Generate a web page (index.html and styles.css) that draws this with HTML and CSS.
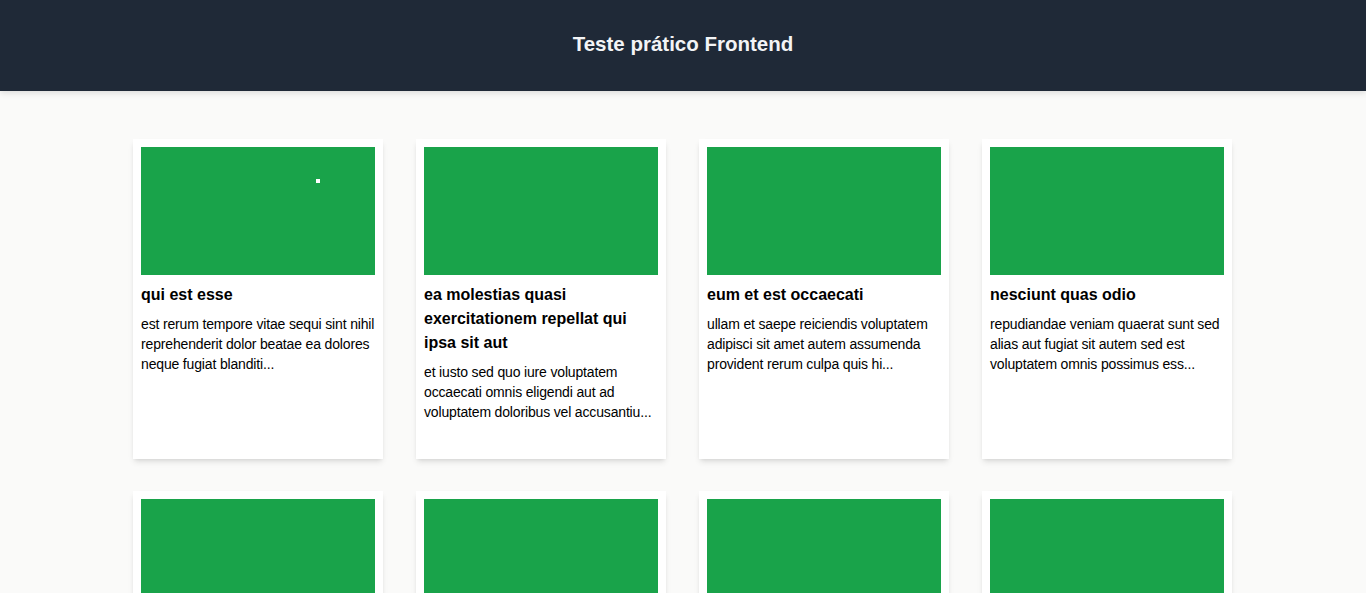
FILE: index.html
```html
<!DOCTYPE html>
<html lang="pt">
<head>
<meta charset="utf-8">
<title>Teste prático Frontend</title>
<link rel="stylesheet" href="styles.css">
</head>
<body>
<header class="header">
  <h1 class="header-title">Teste prático Frontend</h1>
</header>
<main class="main">
  <div class="grid">
    <article class="card">
      <div class="card-image"><span class="card-dot"></span></div>
      <h2 class="card-title">qui est esse</h2>
      <p class="card-text">est rerum tempore vitae sequi sint nihil reprehenderit dolor beatae ea dolores neque fugiat blanditi...</p>
    </article>
    <article class="card">
      <div class="card-image"></div>
      <h2 class="card-title">ea molestias quasi exercitationem repellat qui ipsa sit aut</h2>
      <p class="card-text">et iusto sed quo iure voluptatem occaecati omnis eligendi aut ad voluptatem doloribus vel accusantiu...</p>
    </article>
    <article class="card">
      <div class="card-image"></div>
      <h2 class="card-title">eum et est occaecati</h2>
      <p class="card-text">ullam et saepe reiciendis voluptatem adipisci sit amet autem assumenda provident rerum culpa quis hi...</p>
    </article>
    <article class="card">
      <div class="card-image"></div>
      <h2 class="card-title">nesciunt quas odio</h2>
      <p class="card-text">repudiandae veniam quaerat sunt sed alias aut fugiat sit autem sed est voluptatem omnis possimus ess...</p>
    </article>
    <article class="card">
      <div class="card-image"></div>
      <h2 class="card-title">dolorem eum magni eos aperiam quia</h2>
      <p class="card-text">ut aspernatur corporis harum nihil quis provident sequi mollitia nobis aliquid molestiae perspiciati...</p>
    </article>
    <article class="card">
      <div class="card-image"></div>
      <h2 class="card-title">magnam facilis autem</h2>
      <p class="card-text">dolore placeat quibusdam ea quo vitae magni quis enim qui quis quo nemo aut saepe quidem repellat ex...</p>
    </article>
    <article class="card">
      <div class="card-image"></div>
      <h2 class="card-title">dolorem dolore est ipsam</h2>
      <p class="card-text">dignissimos aperiam dolorem qui eum facilis quibusdam animi sint suscipit qui sint possimus cum quae...</p>
    </article>
    <article class="card">
      <div class="card-image"></div>
      <h2 class="card-title">nesciunt iure omnis dolorem tempora et accusantium</h2>
      <p class="card-text">consectetur animi nesciunt iure dolore enim quia ad veniam autem ut quam aut nobis et est aut quod a...</p>
    </article>
  </div>
</main>
</body>
</html>
```

FILE: styles.css
```css
* {
  box-sizing: border-box;
}

html, body {
  margin: 0;
  padding: 0;
}

body {
  background: #fafaf9;
  font-family: "Liberation Sans", Arial, Helvetica, sans-serif;
  color: #111;
}

.header {
  height: 91px;
  background: #1f2937;
  display: flex;
  align-items: center;
  justify-content: center;
  box-shadow: 0 2px 6px rgba(0, 0, 0, 0.12);
  position: relative;
  z-index: 1;
}

.header-title {
  margin: 0;
  color: #f3f4f6;
  font-size: 20.5px;
  font-weight: 700;
  line-height: 28px;
  padding-bottom: 3px;
}

.main {
  padding: 48px 0 48px;
}

.grid {
  width: 1100px;
  margin: 0 auto;
  display: grid;
  grid-template-columns: repeat(4, 250px);
  gap: 32px 33px;
}

.card {
  background: #fff;
  height: 320px;
  padding: 8px;
  box-shadow: 0 4px 6px -1px rgba(0, 0, 0, 0.1), 0 2px 4px -2px rgba(0, 0, 0, 0.1);
}

.card-image {
  position: relative;
  height: 128px;
  background: #19a34a;
}

.card-dot {
  position: absolute;
  left: 175px;
  top: 32px;
  width: 4px;
  height: 4px;
  background: #fff;
}

.card-title {
  margin: 8px 0 0;
  font-size: 16px;
  line-height: 24px;
  font-weight: 700;
  color: #000;
}

.card-text {
  margin: 7px 0 0;
  font-size: 14px;
  line-height: 20px;
  letter-spacing: -0.16px;
  color: #000;
}
```
